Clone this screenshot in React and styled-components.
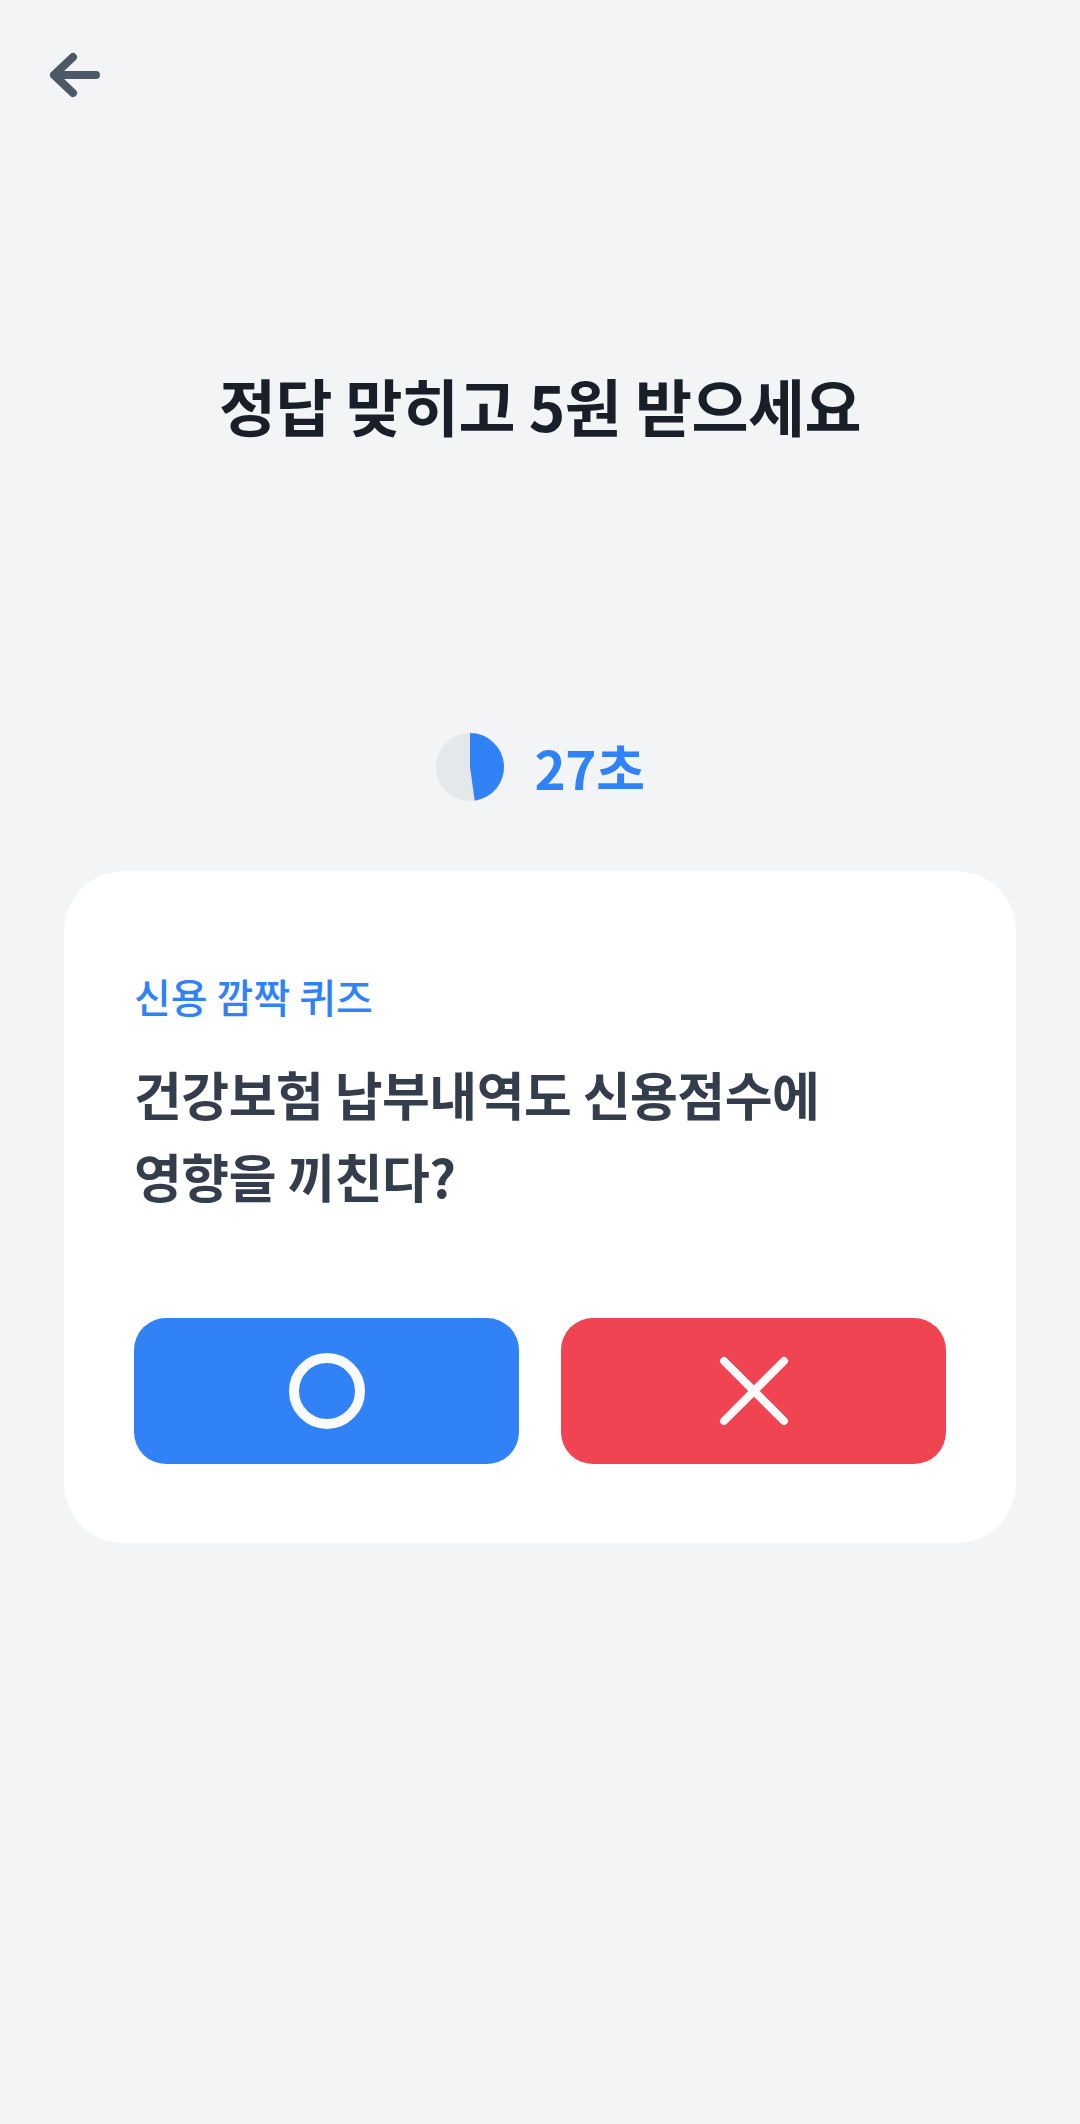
import React from "react";
import styled, { createGlobalStyle } from "styled-components";

const GlobalStyle = createGlobalStyle`
  html, body {
    margin: 0;
    padding: 0;
    background: #f2f4f6;
  }
  body {
    font-family: "Noto Sans CJK KR", "Noto Sans", sans-serif;
    -webkit-font-smoothing: antialiased;
  }
`;

const Page = styled.div`
  min-height: 2124px;
  background: #f2f4f6;
  display: flex;
  flex-direction: column;
`;

const Header = styled.header`
  height: 150px;
  display: flex;
  align-items: center;
  padding-left: 47px;
  box-sizing: border-box;
`;

const BackButton = styled.button`
  border: 0;
  background: transparent;
  padding: 0;
  display: flex;
  cursor: pointer;
`;

const Title = styled.h1`
  margin: 215px 0 0;
  text-align: center;
  font-size: 62px;
  line-height: 80px;
  font-weight: 700;
  color: #191f28;
  letter-spacing: -0.5px;
`;

const TimerRow = styled.div`
  margin-top: 288px;
  display: flex;
  align-items: center;
  justify-content: center;
  gap: 31px;
  height: 68px;
`;

const TimerText = styled.span`
  font-size: 53px;
  line-height: 68px;
  font-weight: 700;
  color: #3182f6;
  letter-spacing: -0.5px;
`;

const Card = styled.section`
  margin: 70px 64px 0;
  background: #ffffff;
  border-radius: 60px;
  padding: 100px 70px 79px;
  display: flex;
  flex-direction: column;
`;

const Label = styled.div`
  font-size: 40px;
  line-height: 50px;
  font-weight: 500;
  color: #3182f6;
`;

const Question = styled.p`
  margin: 32px 0 0;
  font-size: 52px;
  line-height: 82px;
  font-weight: 700;
  color: #333d4b;
  letter-spacing: -0.5px;
`;

const Choices = styled.div`
  margin-top: 101px;
  display: grid;
  grid-template-columns: 1fr 1fr;
  gap: 42px;
`;

const ChoiceButton = styled.button`
  height: 146px;
  border: 0;
  border-radius: 32px;
  background: ${(p) => (p.$variant === "yes" ? "#3182f6" : "#f04452")};
  display: flex;
  align-items: center;
  justify-content: center;
  cursor: pointer;
  padding: 0;
`;

const BackIcon = () => (
  <svg width="56" height="50" viewBox="0 0 56 50" fill="none">
    <path
      d="M49 25H7M26 7L7 25L26 43"
      stroke="#4e5968"
      strokeWidth="8"
      strokeLinecap="round"
      strokeLinejoin="round"
    />
  </svg>
);

const TimerPie = ({ angle }) => {
  const r = 34;
  const rad = (angle * Math.PI) / 180;
  const x = 34 + r * Math.sin(rad);
  const y = 34 - r * Math.cos(rad);
  const large = angle > 180 ? 1 : 0;
  return (
    <svg width="68" height="68" viewBox="0 0 68 68">
      <circle cx="34" cy="34" r="34" fill="#e5e8eb" />
      <path d={`M34 34 L34 0 A34 34 0 ${large} 1 ${x} ${y} Z`} fill="#3182f6" />
    </svg>
  );
};

const CircleIcon = () => (
  <svg width="78" height="78" viewBox="0 0 78 78" fill="none">
    <circle cx="39" cy="39" r="33" stroke="#f9fafb" strokeWidth="10" />
  </svg>
);

const CrossIcon = () => (
  <svg width="70" height="70" viewBox="0 0 70 70" fill="none">
    <path
      d="M5 5L65 65M65 5L5 65"
      stroke="#f9fafb"
      strokeWidth="8"
      strokeLinecap="round"
    />
  </svg>
);

export default function App() {
  return (
    <>
      <GlobalStyle />
      <Page>
        <Header>
          <BackButton aria-label="뒤로가기">
            <BackIcon />
          </BackButton>
        </Header>
        <Title>정답 맞히고 5원 받으세요</Title>
        <TimerRow>
          <TimerPie angle={172} />
          <TimerText>27초</TimerText>
        </TimerRow>
        <Card>
          <Label>신용 깜짝 퀴즈</Label>
          <Question>
            건강보험 납부내역도 신용점수에
            <br />
            영향을 끼친다?
          </Question>
          <Choices>
            <ChoiceButton $variant="yes" aria-label="O">
              <CircleIcon />
            </ChoiceButton>
            <ChoiceButton $variant="no" aria-label="X">
              <CrossIcon />
            </ChoiceButton>
          </Choices>
        </Card>
      </Page>
    </>
  );
}
